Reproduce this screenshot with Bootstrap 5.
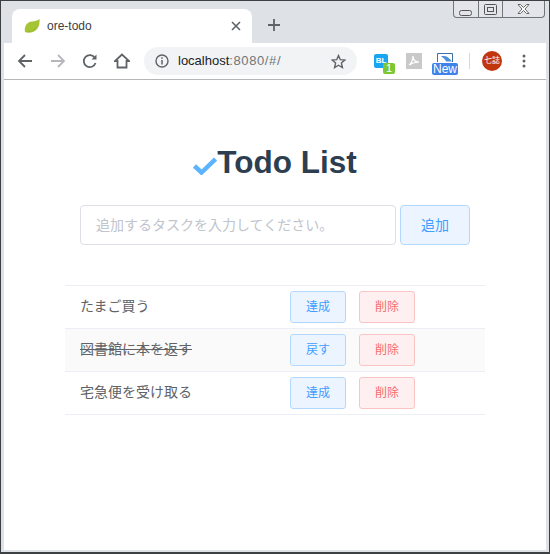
<!DOCTYPE html>
<html lang="ja">

<head>
  <meta charset="UTF-8" />
  <title>ore-todo</title>
  <link href="https://cdn.jsdelivr.net/npm/bootstrap@5.3.0/dist/css/bootstrap.min.css" rel="stylesheet" />
  <style>
    html, body {
      height: 100%;
    }

    body {
      background: #fff;
      font-family: "Liberation Sans", "Noto Sans CJK JP", sans-serif;
    }

    .win-frame {
      width: 550px;
      height: 554px;
      border: 1px solid #3c4043;
      border-bottom-width: 2px;
      padding: 0 3px 2px 3px;
      background: #dee1e6;
      overflow: hidden;
    }

    .win-inner {
      height: 100%;
      background: #fff;
    }

    .tab-strip {
      height: 42px;
      background: #dee1e6;
      padding: 8px 0 0 8px;
    }

    .chrome-tab {
      width: 240px;
      height: 34px;
      background: #fff;
      border-radius: 8px 8px 0 0;
      padding: 0 11px 0 12px;
      font-size: 12px;
      color: #3c4043;
    }

    .tab-leaf {
      margin-right: 7px;
    }

    .tab-plus {
      margin: 9px 0 0 15px;
    }

    .win-buttons {
      top: 0;
      right: 4px;
      height: 17px;
      border: 1px solid #70757a;
      border-top: 0;
      border-radius: 0 0 4px 4px;
      background: #e3e5ea;
    }

    .win-buttons > div {
      border-right: 1px solid #70757a;
    }

    .win-buttons > div:last-child {
      border-right: 0;
    }

    .win-min {
      width: 25px;
    }

    .win-max {
      width: 24px;
    }

    .win-close {
      width: 41px;
    }

    .tool-bar {
      height: 37px;
      border-bottom: 1px solid #b4b6b8;
      padding: 0 0 0 13px;
    }

    .tool-back {
      margin-right: 17px;
    }

    .tool-nav {
      margin-right: 16px;
    }

    .url-box {
      width: 213px;
      height: 28px;
      background: #f1f3f4;
      border-radius: 14px;
      padding: 0 11px;
      font-size: 13px;
      margin-left: 14px;
    }

    .url-info {
      margin-right: 9px;
    }

    .url-host {
      color: #202124;
    }

    .url-rest {
      color: #70757a;
      letter-spacing: 0.6px;
    }

    .ext-badge {
      font-size: 9px;
      line-height: 1;
      color: #fff;
    }

    .ext-bl {
      width: 21px;
      height: 24px;
      margin-left: 17px;
    }

    .ext-bl-a {
      top: 5px;
      left: 0;
      width: 14px;
      height: 14px;
      background: #19a5ef;
      border-radius: 2px;
      font-size: 8px;
      font-weight: 700;
      padding-top: 3px;
    }

    .ext-bl-b {
      top: 14px;
      left: 9px;
      width: 12px;
      height: 11px;
      background: #7dc832;
      border-radius: 2px;
      font-size: 11px;
    }

    .ext-pdf {
      margin-left: 11px;
    }

    .ext-new {
      width: 26px;
      height: 28px;
      margin-left: 10px;
    }

    .ext-new-icon {
      margin-top: 6px;
    }

    .ext-new-label {
      left: 0;
      bottom: 0;
      width: 26px;
      height: 12px;
      background: #3f83ea;
      border-radius: 2px;
      font-size: 12px;
    }

    .user-dot {
      width: 20px;
      height: 20px;
      background: #c1360c;
      font-size: 8px;
      margin-left: 12px;
    }

    .tool-sep {
      width: 1px;
      height: 16px;
      background: #d5d7da;
      margin-left: 11px;
    }

    .tool-menu {
      margin-left: 20px;
    }

    .todo-page {
      width: 420px;
      margin-left: 61px;
      padding-top: 62px;
    }

    .todo-head {
      font-size: 31.5px;
      font-weight: 700;
      color: #2c3e50;
      line-height: 40px;
      margin: 0 0 23px 0;
    }

    .todo-form {
      padding: 0 15px;
      margin-bottom: 40px;
    }

    .todo-input {
      width: 316px;
      height: 40px;
      border: 1px solid #dcdfe6;
      border-radius: 4px;
      padding: 0 15px;
      font-size: 14px;
      color: #606266;
      box-shadow: none;
    }

    .todo-input::placeholder {
      color: #c0c4cc;
      opacity: 1;
    }

    .el-btn {
      border-radius: 3px;
      padding: 0;
      line-height: 1;
    }

    .el-blue, .el-blue:hover {
      background: #ecf5ff;
      border: 1px solid #b3d8ff;
      color: #409eff;
    }

    .el-red, .el-red:hover {
      background: #fef0f0;
      border: 1px solid #fbc4c4;
      color: #f56c6c;
    }

    .el-add {
      width: 70px;
      height: 40px;
      font-size: 14px;
      border-radius: 4px;
    }

    .el-small {
      width: 56px;
      height: 32px;
      font-size: 12px;
    }

    .el-gap {
      margin-left: 13px;
    }

    .todo-list {
      border-top: 1px solid #ebeef5;
    }

    .todo-row {
      height: 43px;
      border-bottom: 1px solid #ebeef5;
      padding-left: 15px;
      font-size: 14px;
      color: #606266;
    }

    .todo-row.is-done {
      background: #fafafa;
    }

    .todo-row.is-done .todo-text {
      text-decoration: line-through;
    }

    .todo-text {
      width: 210px;
      padding-bottom: 2px;
    }
  </style>
</head>

<body class="m-0">

  <div class="win-frame position-relative">
    <div class="win-buttons position-absolute d-flex">
      <div class="win-min d-flex align-items-center justify-content-center">
        <svg width="14" height="7" viewBox="0 0 14 7" class="mt-2"><rect x=".5" y=".5" width="12" height="5" rx="2" fill="none" stroke="#555"/></svg>
      </div>
      <div class="win-max d-flex align-items-center justify-content-center">
        <svg width="13" height="11" viewBox="0 0 13 11"><rect x=".5" y=".5" width="12" height="10" rx="1" fill="none" stroke="#555"/><rect x="3.500" y="3.500" width="6" height="4" fill="none" stroke="#555"/></svg>
      </div>
      <div class="win-close d-flex align-items-center justify-content-center">
        <svg width="13" height="10" viewBox="0 0 13 10"><path d="M1 .5h2.500l3 3 3-3H12L8 5l4 4.500H9.500l-3-3-3 3H1L5 5z" fill="#fff" stroke="#666"/></svg>
      </div>
    </div>

    <div class="win-inner d-flex flex-column">
      <div class="tab-strip d-flex">
        <div class="chrome-tab d-flex align-items-center">
          <svg width="16" height="16" viewBox="0 0 16 16" class="tab-leaf">
            <path d="M1 14C0 8 3 4 8 3.500 11 3.200 13.500 2.500 15.500 1 16 6 14.500 12 9 14 6 15 3 15 1 14z" fill="#a5c534"/>
            <path d="M2 13c4 1 8 0 11-5-2 4-6 6.500-11 5z" fill="#4d8f2c"/>
          </svg>
          <span>ore-todo</span>
          <svg width="10" height="10" viewBox="0 0 10 10" class="ms-auto"><path d="M1 1l8 8M9 1l-8 8" stroke="#5f6368" stroke-width="1.600"/></svg>
        </div>
        <svg width="14" height="14" viewBox="0 0 14 14" class="tab-plus"><path d="M7 1v12M1 7h12" stroke="#5f6368" stroke-width="1.800"/></svg>
      </div>

      <div class="tool-bar d-flex align-items-center">
        <svg width="16" height="16" viewBox="0 0 16 16" class="tool-back"><path d="M15 8H2M8 2 2 8l6 6" fill="none" stroke="#5f6368" stroke-width="1.800"/></svg>
        <svg width="16" height="16" viewBox="0 0 16 16" class="tool-nav"><path d="M1 8h13M8 2l6 6-6 6" fill="none" stroke="#b5b7ba" stroke-width="1.800"/></svg>
        <svg width="16" height="16" viewBox="0 0 16 16" class="tool-nav"><path d="M13.500 10a6 6 0 1 1-.6-5" fill="none" stroke="#5f6368" stroke-width="1.800"/><path d="M14.500 1.500v5h-5z" fill="#5f6368"/></svg>
        <svg width="16" height="16" viewBox="0 0 16 16"><path d="M8 1.500 1 8h2.500v6.500h9V8H15z" fill="none" stroke="#5f6368" stroke-width="1.800"/></svg>

        <div class="url-box d-flex align-items-center">
          <svg width="14" height="14" viewBox="0 0 14 14" class="url-info"><circle cx="7" cy="7" r="6" fill="none" stroke="#5f6368" stroke-width="1.400"/><path d="M7 6v4.500M7 3.200v1.500" stroke="#5f6368" stroke-width="1.500"/></svg>
          <span><span class="url-host">localhost</span><span class="url-rest">:8080/#/</span></span>
          <svg width="15" height="15" viewBox="0 0 15 15" class="ms-auto"><path d="M7.500 1.500 9.300 5.700l4.500.4-3.400 3 1 4.400-3.900-2.300-3.900 2.300 1-4.400-3.400-3 4.500-.4z" fill="none" stroke="#5f6368" stroke-width="1.400"/></svg>
        </div>

        <div class="ext-bl position-relative text-center">
          <div class="ext-bl-a ext-badge position-absolute">BL</div>
          <div class="ext-bl-b ext-badge position-absolute">1</div>
        </div>
        <svg width="16" height="16" viewBox="0 0 16 16" class="ext-pdf"><rect width="16" height="16" fill="#c9c9c9"/><path d="M3 12c2-1 4-5 4-9 0 4 2 6 6 6-3 0-7 1-10 3z" fill="none" stroke="#fff" stroke-width="1.200"/></svg>
        <div class="ext-new position-relative text-center">
          <svg width="16" height="10" viewBox="0 0 16 10" class="ext-new-icon d-block mx-auto"><path d="M.5 9V.5h15V9" fill="#fff" stroke="#3f6ea8"/><path d="M4 3.500c4-1.500 8 .5 11 5H9C8.500 6.500 6.500 4.500 4 3.500z" fill="#4b8fd8"/></svg>
          <div class="ext-new-label ext-badge position-absolute">New</div>
        </div>
        <div class="tool-sep"></div>
        <div class="user-dot ext-badge rounded-circle d-flex align-items-center justify-content-center">七誌</div>
        <svg width="4" height="14" viewBox="0 0 4 14" class="tool-menu"><circle cx="2" cy="2" r="1.500" fill="#5f6368"/><circle cx="2" cy="7" r="1.500" fill="#5f6368"/><circle cx="2" cy="12" r="1.500" fill="#5f6368"/></svg>
      </div>

      <div class="todo-page">
        <h1 class="todo-head d-flex align-items-center justify-content-center">
          <svg width="24" height="18" viewBox="0 0 24 18" class="mt-2"><path d="M1.500 9 8.500 15.500 22.500 2" fill="none" stroke="#5cb3ff" stroke-width="4.500"/></svg>
          <span>Todo List</span>
        </h1>

        <form class="todo-form d-flex gap-1" onsubmit="return false">
          <input type="text" class="form-control todo-input" placeholder="追加するタスクを入力してください。">
          <button class="btn el-btn el-blue el-add" type="button">追加</button>
        </form>

        <div class="todo-list">
          <div class="todo-row d-flex align-items-center">
            <span class="todo-text">たまご買う</span>
            <button class="btn el-btn el-blue el-small" type="button">達成</button>
            <button class="btn el-btn el-red el-small el-gap" type="button">削除</button>
          </div>
          <div class="todo-row is-done d-flex align-items-center">
            <span class="todo-text">図書館に本を返す</span>
            <button class="btn el-btn el-blue el-small" type="button">戻す</button>
            <button class="btn el-btn el-red el-small el-gap" type="button">削除</button>
          </div>
          <div class="todo-row d-flex align-items-center">
            <span class="todo-text">宅急便を受け取る</span>
            <button class="btn el-btn el-blue el-small" type="button">達成</button>
            <button class="btn el-btn el-red el-small el-gap" type="button">削除</button>
          </div>
        </div>
      </div>
    </div>
  </div>

  <script src="https://cdn.jsdelivr.net/npm/bootstrap@5.3.0/dist/js/bootstrap.bundle.min.js"></script>
</body>

</html>
